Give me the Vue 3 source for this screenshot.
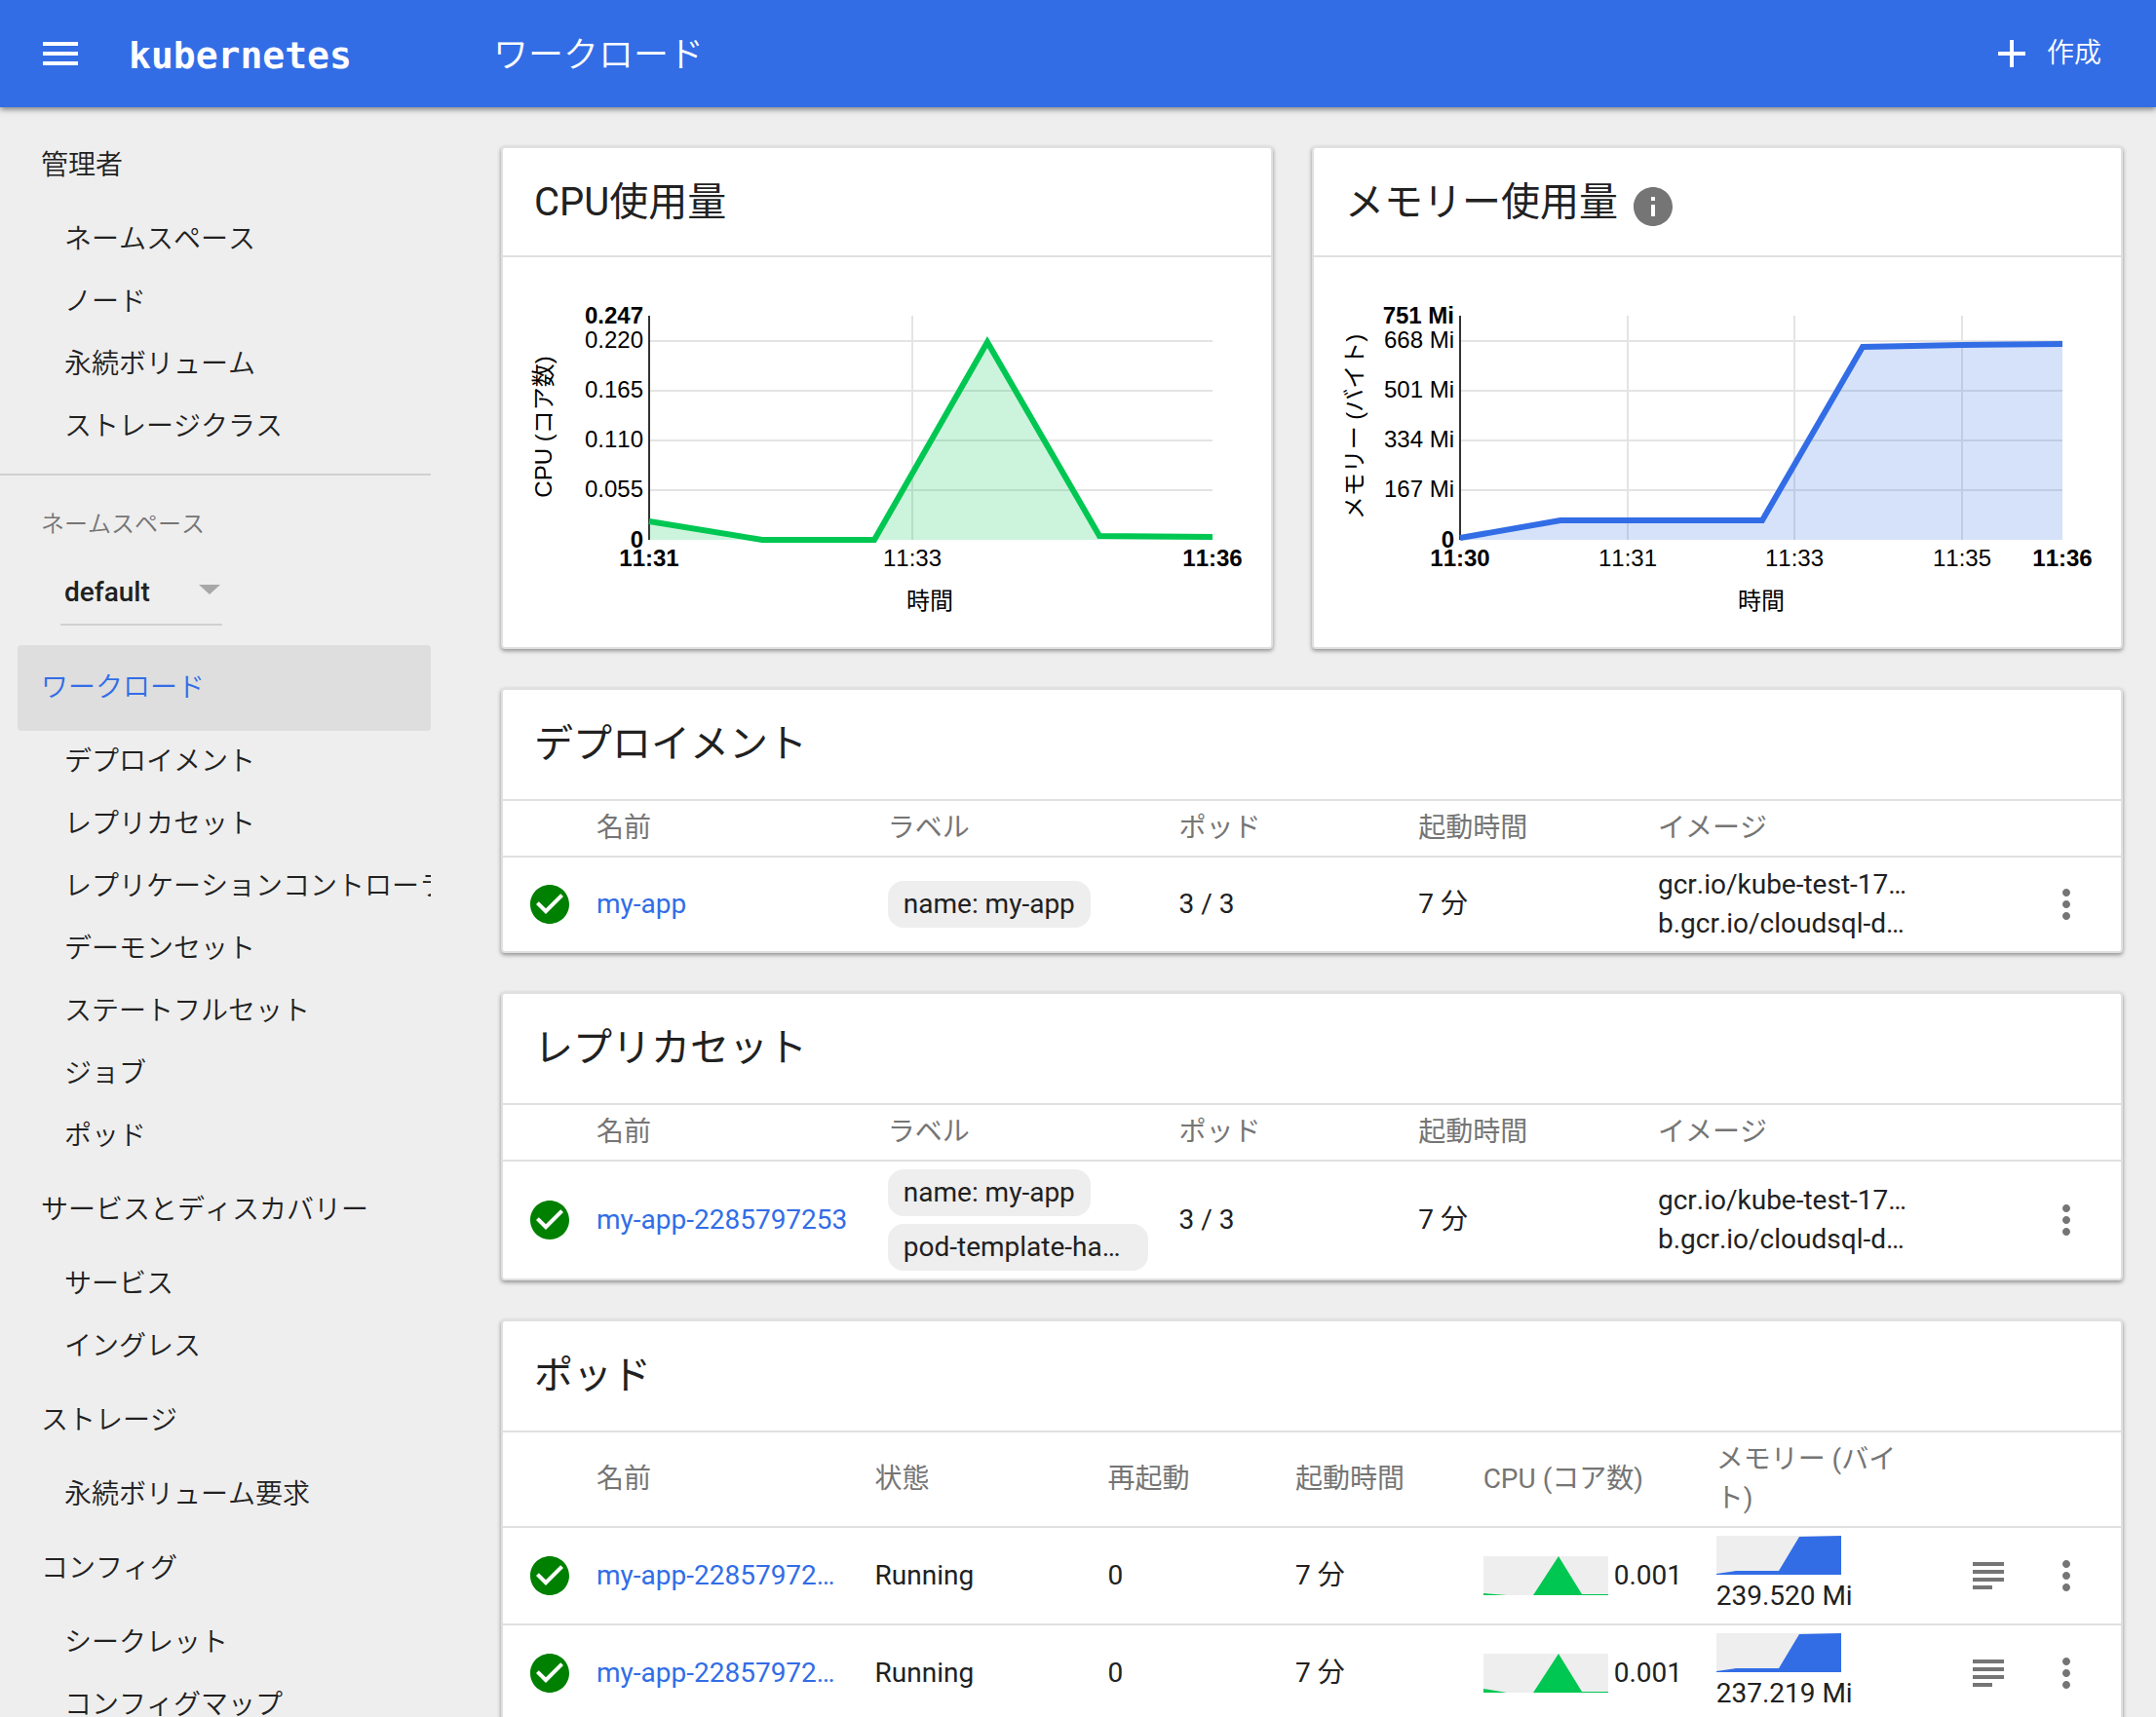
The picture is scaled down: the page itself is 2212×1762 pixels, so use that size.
<script setup>
import { ref } from 'vue'

const namespace = ref('default')

const adminItems = ['ネームスペース', 'ノード', '永続ボリューム', 'ストレージクラス']

const groups = [
  {
    title: 'ワークロード',
    active: true,
    items: [
      'デプロイメント',
      'レプリカセット',
      'レプリケーションコントローラー',
      'デーモンセット',
      'ステートフルセット',
      'ジョブ',
      'ポッド'
    ]
  },
  { title: 'サービスとディスカバリー', items: ['サービス', 'イングレス'] },
  { title: 'ストレージ', items: ['永続ボリューム要求'] },
  { title: 'コンフィグ', items: ['シークレット', 'コンフィグマップ'] }
]

const charts = [
  {
    title: 'CPU使用量',
    info: false,
    width: 788,
    color: '#00c752',
    left: 150,
    right: 728,
    axisLabel: 'CPU (コア数)',
    timeX: 438,
    yTicks: [
      { text: '0.247', y: 60, bold: true },
      { text: '0.220', y: 86 },
      { text: '0.165', y: 137 },
      { text: '0.110', y: 188 },
      { text: '0.055', y: 239 },
      { text: '0', y: 290, bold: true }
    ],
    xTicks: [
      { text: '11:31', x: 150, bold: true },
      { text: '11:33', x: 420 },
      { text: '11:36', x: 728, bold: true }
    ],
    points: [[150, 271], [266, 290], [381, 290], [497, 87], [612, 286], [728, 287]]
  },
  {
    title: 'メモリー使用量',
    info: true,
    width: 828,
    color: '#326de6',
    left: 150,
    right: 768,
    axisLabel: 'メモリー (バイト)',
    timeX: 459,
    yTicks: [
      { text: '751 Mi', y: 60, bold: true },
      { text: '668 Mi', y: 86 },
      { text: '501 Mi', y: 137 },
      { text: '334 Mi', y: 188 },
      { text: '167 Mi', y: 239 },
      { text: '0', y: 290, bold: true }
    ],
    xTicks: [
      { text: '11:30', x: 150, bold: true },
      { text: '11:31', x: 322 },
      { text: '11:33', x: 493 },
      { text: '11:35', x: 665 },
      { text: '11:36', x: 768, bold: true }
    ],
    points: [[150, 288], [253, 270], [460, 270], [563, 92], [665, 90], [768, 89]]
  }
]

const linePoints = (c) => c.points.map((p) => p.join(',')).join(' ')
const areaPoints = (c) => `${c.left},290 ${linePoints(c)} ${c.right},290`

const images = ['gcr.io/kube-test-17…', 'b.gcr.io/cloudsql-d…']

const tables = [
  {
    title: 'デプロイメント',
    row: { name: 'my-app', labels: [{ text: 'name: my-app' }], pods: '3 / 3', age: '7 分' }
  },
  {
    title: 'レプリカセット',
    row: {
      name: 'my-app-2285797253',
      labels: [{ text: 'name: my-app' }, { text: 'pod-template-ha…', full: true }],
      pods: '3 / 3',
      age: '7 分'
    }
  }
]

const pods = [
  {
    name: 'my-app-22857972…',
    status: 'Running',
    restarts: 0,
    age: '7 分',
    cpu: '0.001',
    memory: '239.520 Mi',
    cpuShape: '0,40 0,38 24,40 51,40 77,0 101,39 128,39 128,40',
    memoryShape: '0,40 0,39 20,36 64,36 85,1 128,0 128,40'
  },
  {
    name: 'my-app-22857972…',
    status: 'Running',
    restarts: 0,
    age: '7 分',
    cpu: '0.001',
    memory: '237.219 Mi',
    cpuShape: '0,40 0,36 24,40 51,40 77,0 101,39 128,39 128,40',
    memoryShape: '0,40 0,39 20,36 64,36 85,1 128,0 128,40'
  }
]

const checkPath =
  'M12 2C6.48 2 2 6.48 2 12s4.48 10 10 10 10-4.48 10-10S17.52 2 12 2zm-2 15l-5-5 1.41-1.41L10 14.17l7.59-7.59L19 8l-9 9z'
const morePath =
  'M12 8c1.1 0 2-.9 2-2s-.9-2-2-2-2 .9-2 2 .9 2 2 2zm0 2c-1.1 0-2 .9-2 2s.9 2 2 2 2-.9 2-2-.9-2-2-2zm0 6c-1.1 0-2 .9-2 2s.9 2 2 2 2-.9 2-2-.9-2-2-2z'
</script>

<template>
  <div class="shell">
    <header class="topbar">
      <button class="icon-button" type="button" aria-label="Menu">
        <svg class="icon" viewBox="0 0 24 24"><path d="M3 18h18v-2H3v2zm0-5h18v-2H3v2zm0-7v2h18V6H3z" /></svg>
      </button>
      <a class="logo" href="#">kubernetes</a>
      <h1 class="page-title">ワークロード</h1>
      <button class="create" type="button">
        <svg class="icon" viewBox="0 0 24 24"><path d="M19 13h-6v6h-2v-6H5v-2h6V5h2v6h6v2z" /></svg>
        <span>作成</span>
      </button>
    </header>

    <div class="body">
      <nav class="sidebar">
        <a class="group" href="#">管理者</a>
        <a v-for="item in adminItems" :key="item" class="item" href="#">{{ item }}</a>

        <div class="namespace">
          <label class="namespace-label" for="namespace">ネームスペース</label>
          <div class="select-wrap">
            <select id="namespace" v-model="namespace">
              <option value="default">default</option>
            </select>
            <svg class="arrow" viewBox="0 0 22 10"><path d="M0 0h22L11 10z" /></svg>
          </div>
        </div>

        <template v-for="group in groups" :key="group.title">
          <a class="group" :class="{ active: group.active }" href="#">{{ group.title }}</a>
          <a v-for="item in group.items" :key="item" class="item" href="#">{{ item }}</a>
        </template>
      </nav>

      <main class="content">
        <div class="charts">
          <section v-for="c in charts" :key="c.title" class="card chart-card">
            <h2 class="card-title chart-title">
              {{ c.title }}
              <svg v-if="c.info" class="icon info" viewBox="0 0 24 24">
                <path d="M12 2C6.48 2 2 6.48 2 12s4.48 10 10 10 10-4.48 10-10S17.52 2 12 2zm1 15h-2v-6h2v6zm0-8h-2V7h2v2z" />
              </svg>
            </h2>
            <svg class="chart" :viewBox="`0 0 ${c.width} 400`">
              <g class="grid">
                <line v-for="t in c.yTicks.slice(1, -1)" :key="t.text" :x1="c.left" :x2="c.right" :y1="t.y" :y2="t.y" />
                <line v-for="t in c.xTicks.slice(1, -1)" :key="t.text" :x1="t.x" :x2="t.x" y1="60" y2="290" />
              </g>
              <line class="axis" :x1="c.left" :x2="c.left" y1="60" y2="290" />
              <text
                v-for="t in c.yTicks"
                :key="'y' + t.text"
                :class="{ bold: t.bold }"
                :x="c.left - 6"
                :y="t.bold ? t.y + 8 : t.y + 7"
                text-anchor="end"
              >{{ t.text }}</text>
              <polygon :points="areaPoints(c)" :fill="c.color" fill-opacity="0.2" />
              <polyline :points="linePoints(c)" fill="none" :stroke="c.color" stroke-width="6" />
              <text
                v-for="t in c.xTicks"
                :key="'x' + t.text"
                :class="{ bold: t.bold }"
                :x="t.x"
                y="317"
                text-anchor="middle"
              >{{ t.text }}</text>
              <text :x="c.timeX" y="361" text-anchor="middle">時間</text>
              <text transform="translate(50 174) rotate(-90)" text-anchor="middle">{{ c.axisLabel }}</text>
            </svg>
          </section>
        </div>

        <section v-for="t in tables" :key="t.title" class="card">
          <h2 class="card-title">{{ t.title }}</h2>
          <table>
            <colgroup>
              <col class="c-icon" />
              <col class="c-name" />
              <col class="c-labels" />
              <col class="c-pods" />
              <col class="c-age" />
              <col class="c-images" />
              <col />
            </colgroup>
            <thead>
              <tr>
                <th></th>
                <th>名前</th>
                <th>ラベル</th>
                <th>ポッド</th>
                <th>起動時間</th>
                <th>イメージ</th>
                <th></th>
              </tr>
            </thead>
            <tbody>
              <tr>
                <td class="status">
                  <svg class="icon ok" viewBox="0 0 24 24"><path :d="checkPath" /></svg>
                </td>
                <td><a class="link" href="#">{{ t.row.name }}</a></td>
                <td>
                  <div class="chips">
                    <span v-for="l in t.row.labels" :key="l.text" class="chip" :class="{ full: l.full }">{{ l.text }}</span>
                  </div>
                </td>
                <td>{{ t.row.pods }}</td>
                <td>{{ t.row.age }}</td>
                <td><div v-for="i in images" :key="i">{{ i }}</div></td>
                <td>
                  <div class="actions">
                    <button class="icon-button" type="button" aria-label="Actions">
                      <svg class="icon" viewBox="0 0 24 24"><path :d="morePath" /></svg>
                    </button>
                  </div>
                </td>
              </tr>
            </tbody>
          </table>
        </section>

        <section class="card">
          <h2 class="card-title">ポッド</h2>
          <table>
            <colgroup>
              <col class="c-icon" />
              <col class="p-name" />
              <col class="p-wide" />
              <col class="p-narrow" />
              <col class="p-narrow" />
              <col class="p-wide" />
              <col class="p-wide" />
              <col />
            </colgroup>
            <thead>
              <tr>
                <th></th>
                <th>名前</th>
                <th>状態</th>
                <th>再起動</th>
                <th>起動時間</th>
                <th>CPU (コア数)</th>
                <th>メモリー (バイト)</th>
                <th></th>
              </tr>
            </thead>
            <tbody>
              <tr v-for="p in pods" :key="p.memory">
                <td class="status">
                  <svg class="icon ok" viewBox="0 0 24 24"><path :d="checkPath" /></svg>
                </td>
                <td><a class="link" href="#">{{ p.name }}</a></td>
                <td>{{ p.status }}</td>
                <td>{{ p.restarts }}</td>
                <td>{{ p.age }}</td>
                <td>
                  <div class="usage">
                    <svg class="spark green" viewBox="0 0 128 40"><polygon :points="p.cpuShape" /></svg>
                    <span>{{ p.cpu }}</span>
                  </div>
                </td>
                <td>
                  <div class="usage stacked">
                    <svg class="spark blue" viewBox="0 0 128 40"><polygon :points="p.memoryShape" /></svg>
                    <span>{{ p.memory }}</span>
                  </div>
                </td>
                <td>
                  <div class="actions">
                    <button class="icon-button" type="button" aria-label="Logs">
                      <svg class="icon" viewBox="0 0 24 24"><path d="M14 17H4v2h10v-2zm6-8H4v2h16V9zM4 15h16v-2H4v2zM4 5v2h16V5H4z" /></svg>
                    </button>
                    <button class="icon-button" type="button" aria-label="Actions">
                      <svg class="icon" viewBox="0 0 24 24"><path :d="morePath" /></svg>
                    </button>
                  </div>
                </td>
              </tr>
            </tbody>
          </table>
        </section>
      </main>
    </div>
  </div>
</template>

<style>
body {
  margin: 0;
  background: #eee;
}
</style>

<style scoped>
.shell {
  display: flex;
  flex-direction: column;
  height: 100vh;
  overflow: hidden;
  background: #eee;
  color: #212121;
  font-family: Roboto, "Noto Sans CJK JP", sans-serif;
  font-size: 28px;
  font-kerning: none;
  line-height: 40px;
}

.shell *,
.shell {
  box-sizing: border-box;
}

a {
  color: inherit;
  text-decoration: none;
}

button {
  border: 0;
  padding: 0;
  background: none;
  color: inherit;
  font: inherit;
}

.icon {
  display: block;
  flex: none;
  width: 48px;
  height: 48px;
  fill: currentColor;
}

.icon-button {
  flex: none;
}

.topbar {
  position: relative;
  z-index: 1;
  display: flex;
  flex: none;
  align-items: center;
  height: 110px;
  padding: 0 56px 0 30px;
  background: #326de6;
  color: #fff;
  box-shadow: 0 2px 6px rgba(0, 0, 0, 0.5);
}

.topbar .icon-button {
  width: 64px;
  padding: 0 8px;
}

.logo {
  width: 374px;
  margin-left: 38px;
  padding-top: 4px;
  font-family: "DejaVu Sans Mono", monospace;
  font-size: 38px;
  font-weight: 700;
}

.page-title {
  margin: 0;
  padding-top: 4px;
  font-size: 36px;
  font-weight: 350;
}

.create {
  display: flex;
  align-items: center;
  gap: 12px;
  margin-left: auto;
  font-weight: 350;
}

.body {
  display: flex;
  align-items: flex-start;
}

.sidebar {
  flex: none;
  width: 442px;
  padding: 16px 0 16px 18px;
  font-weight: 350;
  overflow: hidden;
}

.group,
.item {
  display: block;
  white-space: nowrap;
}

.group {
  padding: 24px 0 24px 24px;
  border-radius: 4px;
}

.item {
  padding: 12px 0 12px 48px;
}

.active {
  background: #dedede;
  color: #326de6;
}

.namespace {
  margin: 16px 0 20px -18px;
  padding: 30px 0 0 42px;
  border-top: 2px solid #d0d0d0;
}

.namespace-label {
  display: block;
  font-size: 24px;
  color: #757575;
}

.select-wrap {
  position: relative;
  width: 166px;
  margin: 18px 0 0 20px;
}

select {
  display: block;
  width: 100%;
  height: 66px;
  padding: 0 32px 0 4px;
  border: 0;
  border-bottom: 2px solid #d0d0d0;
  border-radius: 0;
  appearance: none;
  background: none;
  color: inherit;
  font: inherit;
  font-weight: 500;
}

.arrow {
  position: absolute;
  top: 24px;
  right: 2px;
  width: 22px;
  height: 10px;
  fill: #a8a8a8;
  pointer-events: none;
}

.content {
  display: flex;
  flex: 1;
  flex-direction: column;
  gap: 40px;
  min-width: 0;
  padding: 40px 34px 40px 72px;
}

.charts {
  display: flex;
}

.card {
  border: 2px solid #e0e0e0;
  border-radius: 4px;
  background: #fff;
  box-shadow: 0 2px 4px rgba(0, 0, 0, 0.4);
}

.chart-card {
  flex: 1 1 0;
  min-width: 0;
}

/* both cards take half of the row; the gutter is cut from the first */
.chart-card:first-child {
  flex-basis: 50%;
  flex-grow: 0;
  margin-right: 40px;
  max-width: calc(50% - 40px);
}

.card-title {
  margin: 0;
  padding: 32px;
  font-size: 40px;
  font-weight: 400;
  line-height: 48px;
}

.chart-title {
  display: flex;
  gap: 12px;
  padding-bottom: 30px;
  border-bottom: 2px solid #e0e0e0;
}

.info {
  margin: 4px 0 -4px;
  fill: #757575;
}

.chart {
  display: block;
  width: 100%;
  font-family: "Liberation Sans", "Noto Sans CJK JP", sans-serif;
  font-size: 24px;
}

.chart .bold {
  font-weight: 700;
}

.grid line {
  stroke: #e4e4e4;
  stroke-width: 2;
}

.axis {
  stroke: #333;
  stroke-width: 2;
}

table {
  width: 100%;
  table-layout: fixed;
  border-collapse: separate;
  border-spacing: 0;
}

th,
td {
  padding: 8px 32px 8px 0;
  border-top: 2px solid #e0e0e0;
  text-align: left;
  vertical-align: middle;
}

th {
  color: #757575;
  font-weight: 400;
}

.status {
  padding: 0 0 0 24px;
}

.c-icon {
  width: 96px;
}

.c-name,
.c-labels {
  width: 18%;
}

.c-pods,
.c-age {
  width: 14.8%;
}

.c-images {
  width: 16%;
}

.p-name {
  width: 17.2%;
}

.p-wide {
  width: 14.4%;
}

.p-narrow {
  width: 11.6%;
}

td > div,
.link {
  white-space: nowrap;
}

.link {
  color: #326de6;
}

.ok {
  fill: #008000;
}

.chips {
  display: flex;
  flex-direction: column;
  align-items: flex-start;
  gap: 8px;
}

.chip {
  padding: 4px 16px;
  border-radius: 16px;
  background: #eee;
}

.full {
  width: 100%;
}

.usage {
  display: flex;
  align-items: center;
  gap: 6px;
}

.stacked {
  flex-direction: column;
  align-items: flex-start;
  gap: 2px;
}

.spark {
  flex: none;
  width: 128px;
  height: 40px;
  background: #eee;
}

.green {
  fill: #00c752;
}

.blue {
  fill: #326de6;
}

.actions {
  display: flex;
  justify-content: flex-end;
  gap: 32px;
  color: #757575;
}
</style>
